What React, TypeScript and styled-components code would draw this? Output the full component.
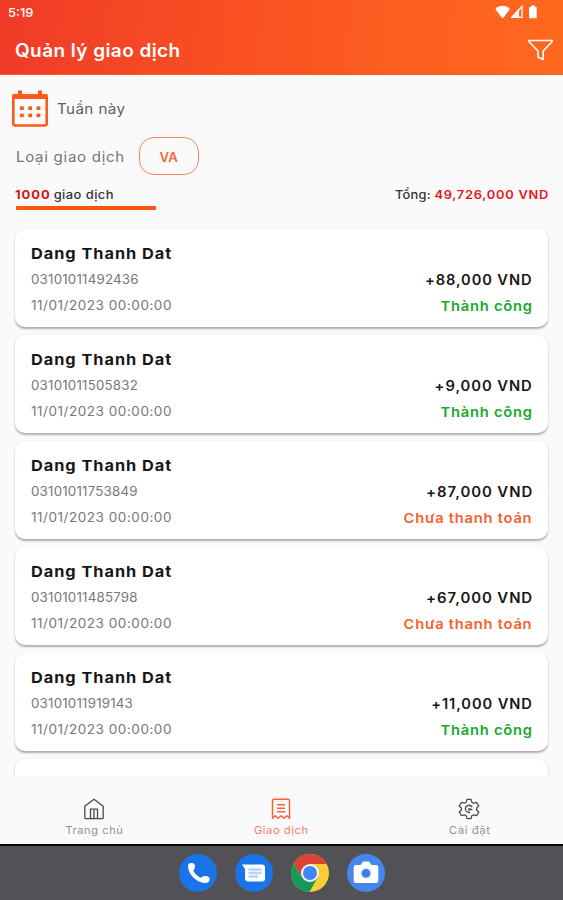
import React from "react";
import styled, { createGlobalStyle } from "styled-components";

const Global = createGlobalStyle`
  * { box-sizing: border-box; }
  body { margin: 0; background: #fafafa; font-family: Inter, "Noto Sans", sans-serif; }
  svg { display: block; flex: none; }
`;

const Screen = styled.div`
  width: 563px;
  height: 900px;
  display: flex;
  flex-direction: column;
  overflow: hidden;
  background: #fafafa;
`;

const Header = styled.header`
  height: 75px;
  flex: none;
  background: linear-gradient(96deg, #f03b28 0%, #f95022 42%, #fd6020 75%, #ff681f 100%);
  border-bottom: 1px solid #fb5a14;
  color: #fff;
`;

const StatusBar = styled.div`
  height: 25px;
  padding: 0 24px 0 8px;
  display: flex;
  align-items: center;
  justify-content: space-between;
`;

const StatusIcons = styled.div`
  display: flex;
  align-items: center;
  padding-bottom: 1px;
`;

const TitleBar = styled.div`
  height: 50px;
  padding: 2px 10px 0 15px;
  display: flex;
  align-items: center;
  justify-content: space-between;

  svg { margin-bottom: 2px; }
`;

type LabelProps = {
  $size: number;
  $weight?: number;
  $color?: string;
  $track?: number;
  $wide?: number;
  $origin?: "left" | "right" | "center";
};
const Label = styled.span<LabelProps>`
  font-size: ${(p) => p.$size}px;
  font-weight: ${(p) => p.$weight ?? 400};
  color: ${(p) => p.$color ?? "inherit"};
  letter-spacing: ${(p) => p.$track ?? 0}px;
  margin-right: ${(p) => -(p.$track ?? 0)}px;
  line-height: 20px;
  white-space: nowrap;
  transform: ${(p) => (p.$wide ? `scaleX(${p.$wide})` : "none")};
  transform-origin: ${(p) => p.$origin ?? "left"} center;
`;

const Period = styled.div`
  height: 62px;
  flex: none;
  padding: 5px 0 0 12px;
  display: flex;
  align-items: center;
  gap: 9px;

  svg { margin-bottom: 1px; }
`;

const TypeRow = styled.div`
  height: 38px;
  flex: none;
  padding-left: 16px;
  display: flex;
  align-items: center;
`;

const TypeName = styled.div`
  width: 123px;
  padding-top: 2px;
  display: flex;
`;

const Chip = styled.button`
  width: 60px;
  height: 38px;
  padding: 3px 0 0;
  display: flex;
  align-items: center;
  justify-content: center;
  border: 1px solid #f98563;
  border-radius: 15px;
  background: transparent;
  font-family: inherit;
`;

const Summary = styled.div`
  height: 31px;
  flex: none;
  margin: 0 15px;
  padding-top: 10px;
  display: flex;
  justify-content: space-between;
`;

const Underline = styled.div`
  width: 140px;
  height: 4px;
  flex: none;
  margin-left: 16px;
  border-radius: 1px;
  background: #f9580c;
`;

const List = styled.main`
  flex: 1;
  min-height: 0;
  overflow: hidden;
  padding: 19px 15px 0;
  display: flex;
  flex-direction: column;
  gap: 8px;
`;

const Card = styled.article`
  height: 98px;
  flex: none;
  padding: 15px 16px 0 16px;
  display: flex;
  justify-content: space-between;
  border-radius: 10px;
  background: #fff;
  box-shadow: 0 1.5px 2px rgba(0, 0, 0, 0.3);
`;

const Column = styled.div<{ $end?: boolean }>`
  display: flex;
  flex-direction: column;
  justify-content: ${(p) => (p.$end ? "flex-end" : "flex-start")};
  align-items: ${(p) => (p.$end ? "flex-end" : "flex-start")};
  height: 72px;
  gap: 6px;
`;

const Tabs = styled.nav`
  height: 68px;
  flex: none;
  display: grid;
  grid-template-columns: repeat(3, 1fr);
`;

const Tab = styled.div`
  display: flex;
  flex-direction: column;
  align-items: center;
  padding-top: 22px;
  gap: 1px;
`;

const Dock = styled.footer`
  height: 56px;
  flex: none;
  padding-bottom: 1px;
  border-top: 2px solid #08080a;
  background: #525155;
  display: flex;
  justify-content: center;
  align-items: center;
  gap: 18px;
`;

const CalendarIcon = () => (
  <svg width="36" height="37" viewBox="0 0 36 37">
    <rect x="1.3" y="5.3" width="33.4" height="30.2" rx="2" fill="none" stroke="#fa5b1b" strokeWidth="2.6" />
    <path d="M2 4h32q2 0 2 2v3H0V6q0-2 2-2zM6 .5h4v5H6zM26 .5h4v5h-4z" fill="#fa5b1b" />
    <g fill="#fa5b1b">
      {[8, 16.3, 24.6].map((x) => (
        <React.Fragment key={x}>
          <rect x={x} y="16.4" width="3.8" height="3.6" />
          <rect x={x} y="23.6" width="3.8" height="3.6" />
        </React.Fragment>
      ))}
    </g>
  </svg>
);

const SignalIcons = () => (
  <svg width="44" height="16" viewBox="0 0 44 16" fill="#fff">
    <path d="M.8 4Q7.6-.5 14.4 4v1.800L8.600 13.400Q7.600 14.500 6.600 13.400L.8 5.800z" />
    <path d="M17 13.300 27 2.500v10.800z" fill="none" stroke="#fff" strokeWidth="1.3" />
    <path d="m16 13.800 8-9v9z" />
    <path d="M36 1.500h4v1.400h1.700v11.300h-7.600V2.900H36z" />
  </svg>
);

const FilterIcon = () => (
  <svg width="25" height="22" viewBox="0 0 25 22" fill="none" stroke="#fff" strokeWidth="1.6" strokeLinejoin="round">
    <path d="M1 1.500h23v1.300L15.200 12v8.500l-5.200-2.500v-6L1 2.800z" />
  </svg>
);

const HomeIcon = () => (
  <svg width="22" height="22" viewBox="0 0 22 22" fill="none" stroke="#4a4a4a" strokeWidth="1.3" strokeLinejoin="round">
    <path d="M1.800 8.200 11 1.300l9.200 6.900v11.500q0 1-1 1H2.800q-1 0-1-1z" />
    <path d="M7.500 20.500v-9.300h7v9.300M11 12v8.500" />
  </svg>
);

const ReceiptIcon = () => (
  <svg width="22" height="22" viewBox="0 0 22 22" fill="none" stroke="#f8623d" strokeWidth="1.5" strokeLinejoin="round">
    <path d="M2.500 20.200V3q0-1.700 1.700-1.700h13.600q1.700 0 1.700 1.700v17.200l-2.800-2.500-2.800 2.500-2.900-2.500-2.900 2.500-2.800-2.500zM7 6.700h8M7 10.200h8M7 13.700h8" />
  </svg>
);

const GearIcon = () => (
  <svg width="22" height="22" viewBox="0 0 22 22" fill="none" stroke="#4c4c4c" strokeWidth="1.3" strokeLinejoin="round">
    <path d="m9 1.300 4 0 .8 2.900 1.800 1 3-.8 2.200 3.600-2.200 2v2l2.200 2-2.200 3.600-3-.8-1.800 1-.8 2.900H9l-.8-2.900-1.800-1-3 .8L1.200 14l2.200-2v-2l-2.200-2 2.200-3.600 3 .8 1.800-1z" />
    <path d="M14.200 9.200A3.600 3.600 0 1 0 12 14.400M14.400 11.800 11 10.600v3" />
  </svg>
);

const PhoneIcon = () => (
  <svg width="38" height="38" viewBox="0 0 38 38">
    <circle cx="19" cy="19" r="19" fill="#1b73e8" />
    <path d="M9 12q0-3 3.400-3 3.600 0 3.600 3.400 0 2.300-1.800 4.200 2.400 5 7.600 7.200 2.300-2.100 4.800-1.700 4.200.4 4 3.500-.2 3.500-4.800 3.400C17 28.300 9 20 9 12z" fill="#fff" />
  </svg>
);

const MessageIcon = () => (
  <svg width="38" height="38" viewBox="0 0 38 38">
    <circle cx="19" cy="19" r="19" fill="#1b73e8" />
    <path d="M7 10.500h20q3 0 3 3v11q0 3-3 3H13q-3 0-3-3V15z" fill="#fff" />
    <path d="M13.500 15.500h13M13.500 19h13M13.500 22.500h9.500" stroke="#b9d2f9" strokeWidth="2.400" />
  </svg>
);

const ChromeIcon = () => (
  <svg width="38" height="38" viewBox="0 0 38 38">
    <circle cx="19" cy="19" r="19" fill="#fbcd38" />
    <path d="M2.500 9.500A19 19 0 0 1 35.500 9.900H19L10.800 23.500z" fill="#da4437" />
    <path d="M2.500 9.500A19 19 0 0 0 18.500 38L26.800 23.500 10.800 23.500z" fill="#169a5a" />
    <circle cx="19" cy="19" r="9" fill="#f5f5f5" />
    <circle cx="19" cy="19" r="7" fill="#4285f4" />
  </svg>
);

const CameraIcon = () => (
  <svg width="38" height="38" viewBox="0 0 38 38">
    <circle cx="19" cy="19" r="19" fill="#4587ee" />
    <path d="M9 11h4.500L16 7.500h6l2.500 3.500H29q2.300 0 2.300 2.300v13.400Q31.300 29 29 29H9q-2.300 0-2.300-2.300V13.300Q6.700 11 9 11z" fill="#fff" />
    <circle cx="19" cy="19.300" r="5.500" fill="#d4e3fb" />
    <circle cx="19" cy="19.300" r="4.300" fill="#3c7fe8" />
  </svg>
);

const transactions = [
  { account: "03101011492436", amount: "+88,000 VND", paid: true, wide: 1.05 },
  { account: "03101011505832", amount: "+9,000 VND", paid: true, wide: 1.06 },
  { account: "03101011753849", amount: "+87,000 VND", paid: false, wide: 1.07 },
  { account: "03101011485798", amount: "+67,000 VND", paid: false, wide: 1.07 },
  { account: "03101011919143", amount: "+11,000 VND", paid: true, wide: 1.05 },
];

export default function App() {
  return (
    <Screen>
      <Global />
      <Header>
        <StatusBar>
          <Label $size={12} $weight={500} $wide={1.08}>5:19</Label>
          <StatusIcons><SignalIcons /></StatusIcons>
        </StatusBar>
        <TitleBar>
          <Label $size={18} $weight={600} $track={0.4} $wide={1.056}>Quản lý giao dịch</Label>
          <FilterIcon />
        </TitleBar>
      </Header>
      <Period>
        <CalendarIcon />
        <Label $size={14} $color="#5e5e5e" $track={0.4} $wide={1.08}>Tuần này</Label>
      </Period>
      <TypeRow>
        <TypeName>
          <Label $size={14} $color="#747474" $track={0.7} $wide={1.07}>Loại giao dịch</Label>
        </TypeName>
        <Chip><Label $size={12.5} $weight={600} $color="#f9623c" $wide={1.06} $origin="center">VA</Label></Chip>
      </TypeRow>
      <Summary>
        <Label $size={12} $weight={500} $color="#333" $track={0.4} $wide={1.08}>
          <Label $size={12} $weight={700} $color="#d0151c" $track={0.9}>1000</Label> giao dịch
        </Label>
        <Label $size={12} $weight={500} $color="#333" $track={0.2} $wide={1.07} $origin="right">
          Tổng: <Label $size={12} $weight={600} $color="#e3151c" $track={0.7}>49,726,000 VND</Label>
        </Label>
      </Summary>
      <Underline />
      <List>
        {transactions.map((t) => (
          <Card key={t.account}>
            <Column>
              <Label $size={15} $weight={700} $color="#161616" $track={0.9} $wide={1.088}>Dang Thanh Dat</Label>
              <Label $size={12.5} $color="#777" $track={0.2} $wide={1.063}>{t.account}</Label>
              <Label $size={12.5} $color="#777" $track={0.5} $wide={1.08}>11/01/2023 00:00:00</Label>
            </Column>
            <Column $end>
              <Label $size={13.8} $weight={600} $color="#171717" $track={0.86} $wide={t.wide + 0.01} $origin="right">{t.amount}</Label>
              <Label $size={13.5} $weight={600} $color={t.paid ? "#17a92b" : "#f8602e"} $track={0.7} $wide={1.088} $origin="right">
                {t.paid ? "Thành công" : "Chưa thanh toán"}
              </Label>
            </Column>
          </Card>
        ))}
        <Card />
      </List>
      <Tabs>
        <Tab><HomeIcon /><Label $size={10.800} $color="#929292" $track={0.6} $wide={1.02} $origin="center">Trang chủ</Label></Tab>
        <Tab><ReceiptIcon /><Label $size={10.800} $color="#fa7c5e" $track={0.5} $wide={1.04} $origin="center">Giao dịch</Label></Tab>
        <Tab><GearIcon /><Label $size={10.800} $color="#929292" $track={0.5} $wide={1.06} $origin="center">Cài đặt</Label></Tab>
      </Tabs>
      <Dock>
        <PhoneIcon />
        <MessageIcon />
        <ChromeIcon />
        <CameraIcon />
      </Dock>
    </Screen>
  );
}
